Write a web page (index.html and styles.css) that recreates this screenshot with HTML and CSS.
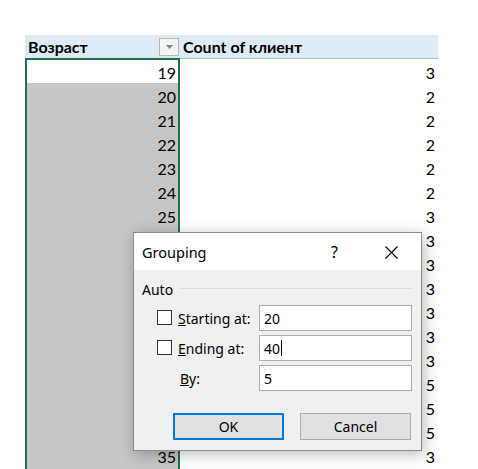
FILE: index.html
```html
<!DOCTYPE html>
<html lang="ru">
<head>
<meta charset="utf-8">
<title>Grouping</title>
<link rel="stylesheet" href="styles.css">
</head>
<body>
<div class="sheet">
  <div class="pivot">
    <div class="col col-a">
      <div class="hcell"><span class="htext">Возраст</span><span class="dd"><svg width="7" height="4" viewBox="0 0 7 4"><path d="M0 0H7L3.5 4Z" fill="#808080"/></svg></span></div>
      <div class="sel">
        <div class="cell active">19</div>
        <div class="cell">20</div>
        <div class="cell">21</div>
        <div class="cell">22</div>
        <div class="cell">23</div>
        <div class="cell">24</div>
        <div class="cell">25</div>
        <div class="cell">26</div>
        <div class="cell">27</div>
        <div class="cell">28</div>
        <div class="cell">29</div>
        <div class="cell">30</div>
        <div class="cell">31</div>
        <div class="cell">32</div>
        <div class="cell">33</div>
        <div class="cell">34</div>
        <div class="cell">35</div>
        <div class="cell"></div>
      </div>
    </div>
    <div class="col col-b">
      <div class="hcell"><span class="htext">Count of клиент</span></div>
      <div class="cell">3</div>
      <div class="cell">2</div>
      <div class="cell">2</div>
      <div class="cell">2</div>
      <div class="cell">2</div>
      <div class="cell">2</div>
      <div class="cell">3</div>
      <div class="cell">3</div>
      <div class="cell">3</div>
      <div class="cell">3</div>
      <div class="cell">3</div>
      <div class="cell">3</div>
      <div class="cell">3</div>
      <div class="cell">5</div>
      <div class="cell">5</div>
      <div class="cell">5</div>
      <div class="cell">3</div>
    </div>
  </div>

  <div class="dialog">
    <div class="titlebar">
      <span class="title">Grouping</span>
      <span class="help">?</span>
      <svg class="close" width="13" height="13" viewBox="0 0 13 13"><path d="M0.5 0.5L12.5 12.5M12.5 0.5L0.5 12.5" stroke="#000" stroke-width="1.1" fill="none"/></svg>
    </div>
    <div class="dbody">
      <div class="legend"><span>Auto</span><span class="rule"></span></div>
      <div class="rows">
        <div class="chk"><span class="box"></span></div>
        <div class="lbl"><u>S</u>tarting at:</div>
        <div class="inp">20</div>

        <div class="chk"><span class="box"></span></div>
        <div class="lbl"><u>E</u>nding at:</div>
        <div class="inp">40<span class="caret"></span></div>

        <div class="chk"></div>
        <div class="lbl lbl-by"><u>B</u>y:</div>
        <div class="inp">5</div>
      </div>
      <div class="buttons">
        <div class="btn btn-default">OK</div>
        <div class="btn">Cancel</div>
      </div>
    </div>
  </div>
</div>
</body>
</html>
```

FILE: styles.css
```css
html, body {
  margin: 0;
  padding: 0;
}

body {
  width: 478px;
  height: 469px;
  overflow: hidden;
  background: #ffffff;
  position: relative;
  font-family: "Lato", "Noto Sans", sans-serif;
  color: #000;
}

.sheet {
  padding: 35px 0 0 25px;
}

.pivot {
  display: flex;
  width: 413px;
}

.col-a {
  width: 155px;
}

.col-b {
  width: 258px;
}

.hcell {
  height: 23px;
  border-bottom: 1px solid #9bc2e6;
  background: #ddebf7;
  display: flex;
  align-items: center;
  justify-content: space-between;
  padding-left: 3px;
  font-weight: 700;
  font-size: 16px;
}

.htext {
  line-height: 25px;
  white-space: nowrap;
}

.dd {
  width: 18px;
  height: 16px;
  margin-right: 1px;
  border: 1px solid #b8b8b8;
  background: #f4f4f4;
  display: flex;
  align-items: center;
  justify-content: center;
}

.sel {
  margin-top: -1px;
  border: 2px solid #217346;
  border-bottom: none;
  background: #c6c6c6;
  position: relative;
}

.cell {
  height: 24px;
  line-height: 27px;
  font-size: 16px;
  text-align: right;
  padding-right: 3px;
  overflow: hidden;
}

.sel .cell {
  padding-right: 2px;
}

.sel .cell.active {
  height: 23px;
  line-height: 25px;
  background: #ffffff;
}

/* Dialog */
.dialog {
  position: absolute;
  left: 133px;
  top: 232px;
  width: 289px;
  height: 219px;
  box-sizing: border-box;
  border: 1px solid #8c8c8c;
  background: #f0f0f0;
  box-shadow: 2px 3px 14px rgba(0, 0, 0, 0.28);
  font-family: "Noto Sans", "Open Sans", sans-serif;
  font-size: 14px;
  color: #000;
}

.titlebar {
  height: 37px;
  background: #ffffff;
  display: flex;
  align-items: center;
  padding: 0 23px 0 8px;
}

.title {
  font-size: 14.5px;
  flex: 1;
}

.help {
  font-size: 16px;
  margin-right: 47px;
}

.close {
  display: block;
  margin-top: 1px;
}

.dbody {
  padding: 10px 9px 10px 8px;
}

.legend {
  height: 18px;
  display: flex;
  align-items: center;
}

.rule {
  flex: 1;
  height: 1px;
  background: #dcdcdc;
  margin-left: 6px;
  margin-top: -2px;
}

.rows {
  margin-top: 7px;
  display: grid;
  grid-template-columns: 36px 81px 153px;
  grid-auto-rows: 26px;
  row-gap: 4px;
  align-items: center;
}

.chk {
  padding-left: 15px;
  height: 15px;
  margin-top: -2px;
}

.box {
  display: block;
  width: 13px;
  height: 13px;
  border: 1px solid #333333;
  background: #ffffff;
}

.lbl {
  white-space: nowrap;
}

.lbl-by {
  padding-left: 2px;
}

.inp {
  height: 26px;
  box-sizing: border-box;
  border: 1px solid #acacac;
  background: #ffffff;
  padding-left: 4px;
  display: flex;
  align-items: center;
}

.caret {
  display: inline-block;
  width: 1px;
  height: 16px;
  background: #000;
  margin-left: 1px;
}

.buttons {
  margin-top: 22px;
  display: flex;
  justify-content: flex-end;
  gap: 16px;
  padding-right: 1px;
}

.btn {
  width: 111px;
  height: 27px;
  box-sizing: border-box;
  border: 1px solid #adadad;
  background: #e1e1e1;
  display: flex;
  align-items: center;
  justify-content: center;
}

.btn-default {
  border: 2px solid #0078d7;
}
```
